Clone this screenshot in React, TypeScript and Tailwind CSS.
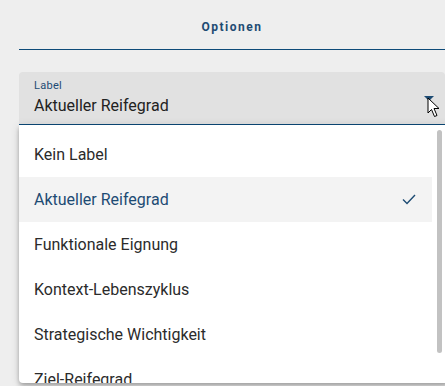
import React from "react";

const items = [
  "Kein Label",
  "Aktueller Reifegrad",
  "Funktionale Eignung",
  "Kontext-Lebenszyklus",
  "Strategische Wichtigkeit",
  "Ziel-Reifegrad",
];

export default function App() {
  return (
    <div className="relative w-[445px] h-[386px] overflow-hidden bg-[#eeeeee] font-['Roboto',sans-serif]">
      <div className="pl-[19px]">
        <div className="h-[50px] flex items-center justify-center pt-[5px] border-b border-[#0d4a78] text-[12px] font-bold tracking-[1.5px] text-[#1d4b73]">
          Optionen
        </div>
        <div className="h-[22px]" />
        <div className="relative h-[53px] rounded-t-[4px] bg-[#e1e1e1] border-b border-[#0d4a78] pl-[15px] pt-[7px]">
          <div className="text-[11px] leading-[14px] text-[#1d4b73] tracking-[0.3px]">Label</div>
          <div className="text-[16px] leading-[22px] text-[#222222] mt-[2px]">Aktueller Reifegrad</div>
          <svg className="absolute left-[405px] top-[24px]" width="10" height="5" viewBox="0 0 10 5">
            <polygon points="0,0 10,0 5,5" fill="#1d4b73" />
          </svg>
        </div>
      </div>

      {/* dropdown panel */}
      <div className="absolute left-[19px] top-[125px] w-[430px] h-[258px] bg-white rounded-b-[4px] shadow-[0_2px_4px_-1px_rgba(0,0,0,0.2),0_4px_5px_0_rgba(0,0,0,0.14),0_1px_10px_0_rgba(0,0,0,0.12)] overflow-hidden">
        <div className="w-[413px] pt-[7px]">
          {items.map((it, i) => {
            const sel = i === 1;
            return (
              <div
                key={it}
                className={
                  sel
                    ? "h-[45px] flex items-center justify-between pl-[15px] pr-[16px] text-[16px] text-[#1d4b73] bg-[#f3f3f3]"
                    : "h-[45px] flex items-center pl-[15px] text-[16px] text-[#2b2b2b]"
                }
              >
                <span>{it}</span>
                {sel && (
                  <svg width="14" height="11" viewBox="0 0 14 11">
                    <polyline points="1,5.5 5,9.5 13,1" fill="none" stroke="#1d4b73" strokeWidth="1.4" />
                  </svg>
                )}
              </div>
            );
          })}
        </div>
        <div className="absolute left-[418px] top-[5px] w-[5px] h-[223px] rounded-full bg-[#c2c2c2]" />
      </div>

      {/* mouse cursor */}
      <svg className="absolute left-[427px] top-[97px]" width="14" height="22" viewBox="0 0 14 22">
        <path d="M1 1 L1 16 L4.5 12.5 L7.5 19.5 L10 18.5 L7 11.5 L12 11.5 Z" fill="#ffffff" stroke="#000000" strokeWidth="1" strokeLinejoin="round" />
      </svg>
    </div>
  );
}
